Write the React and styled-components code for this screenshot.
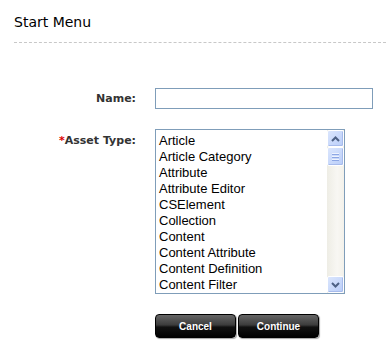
import React from "react";
import styled, { createGlobalStyle } from "styled-components";

const Global = createGlobalStyle`
  html, body { margin: 0; padding: 0; background: #fff; }
  body { font-family: "DejaVu Sans", Verdana, sans-serif; }
`;

const Page = styled.div`
  width: 386px;
  height: 362px;
  overflow: hidden;
  background: #fff;
`;

const Header = styled.div`
  margin-left: 14px;
  padding-top: 14px;
  height: 43px;
  box-sizing: border-box;
  border-bottom: 1px dashed #c8c8c8;
  font-family: "DejaVu Sans", Verdana, sans-serif;
  font-size: 14px;
  color: #000;
  line-height: 16px;
`;

const Form = styled.div`
  display: grid;
  grid-template-columns: 136px 218px;
  column-gap: 19px;
  row-gap: 20px;
  margin-top: 45px;
`;

const Label = styled.div`
  text-align: right;
  font-family: "DejaVu Sans", Verdana, sans-serif;
  font-weight: bold;
  font-size: 11px;
  color: #333;
  line-height: 21px;
  padding-top: ${(p) => p.$top || 0}px;
`;

const Req = styled.span`
  color: #d00;
`;

const TextInput = styled.input`
  box-sizing: border-box;
  width: 218px;
  height: 21px;
  border: 1px solid #7f9db9;
  padding: 0 3px;
  margin: 0;
  outline: none;
  font-family: "Liberation Sans", Arial, sans-serif;
  font-size: 13px;
`;

const ListBox = styled.div`
  box-sizing: border-box;
  width: 190px;
  height: 165px;
  border: 1px solid #7f9db9;
  display: flex;
  background: #fff;
`;

const Items = styled.div`
  flex: 1;
  padding: 3px 0 0 3px;
  overflow: hidden;
`;

const Item = styled.div`
  font-family: "Liberation Sans", Arial, sans-serif;
  font-size: 13px;
  line-height: 16px;
  color: #000;
  white-space: nowrap;
`;

const ScrollBar = styled.div`
  width: 17px;
  display: flex;
  flex-direction: column;
  background: linear-gradient(to right, #eeede5, #f8f7f3 60%, #f3f1ea);
`;

const ScrollBtn = styled.div`
  box-sizing: border-box;
  width: 17px;
  height: 17px;
  border: 1px solid #fff;
  border-radius: 2px;
  background: linear-gradient(135deg, #dbe6fd, #b9cdf9);
  box-shadow: inset -1px -1px 0 #a7bbec;
  display: flex;
  align-items: center;
  justify-content: center;
`;

const Thumb = styled(ScrollBtn)`
  height: 19px;
  flex-direction: column;
  gap: 1px;
`;

const Grip = styled.div`
  width: 7px;
  height: 1px;
  background: #eef3fe;
  border-bottom: 1px solid #8ca6e4;
`;

const Track = styled.div`
  flex: 1;
`;

const Buttons = styled.div`
  display: flex;
  gap: 2px;
`;

const Button = styled.button`
  box-sizing: border-box;
  width: 81px;
  height: 24px;
  border: 1px solid #000;
  border-radius: 4px;
  background: linear-gradient(to bottom, #666 0%, #3c3c3c 45%, #111 55%, #000 100%);
  box-shadow: 1px 1px 1px rgba(0,0,0,0.35);
  color: #fff;
  font-family: "Liberation Sans", Arial, sans-serif;
  font-weight: bold;
  font-size: 10px;
  padding: 0;
  cursor: pointer;
`;

const Chevron = ({ up }) => (
  <svg width="9" height="6" viewBox="0 0 9 6">
    <path
      d={up ? "M1 5 L4.5 1.5 L8 5" : "M1 1 L4.5 4.5 L8 1"}
      fill="none"
      stroke="#4d6185"
      strokeWidth="2"
    />
  </svg>
);

const types = [
  "Article",
  "Article Category",
  "Attribute",
  "Attribute Editor",
  "CSElement",
  "Collection",
  "Content",
  "Content Attribute",
  "Content Definition",
  "Content Filter",
];

export default function App() {
  return (
    <Page>
      <Global />
      <Header>Start Menu</Header>
      <Form>
        <Label>Name:</Label>
        <TextInput type="text" />
        <Label $top={1}>
          <Req>*</Req>Asset Type:
        </Label>
        <ListBox>
          <Items>
            {types.map((t) => (
              <Item key={t}>{t}</Item>
            ))}
          </Items>
          <ScrollBar>
            <ScrollBtn>
              <Chevron up />
            </ScrollBtn>
            <Thumb>
              <Grip />
              <Grip />
              <Grip />
            </Thumb>
            <Track />
            <ScrollBtn>
              <Chevron />
            </ScrollBtn>
          </ScrollBar>
        </ListBox>
        <div />
        <Buttons>
          <Button>Cancel</Button>
          <Button>Continue</Button>
        </Buttons>
      </Form>
    </Page>
  );
}
